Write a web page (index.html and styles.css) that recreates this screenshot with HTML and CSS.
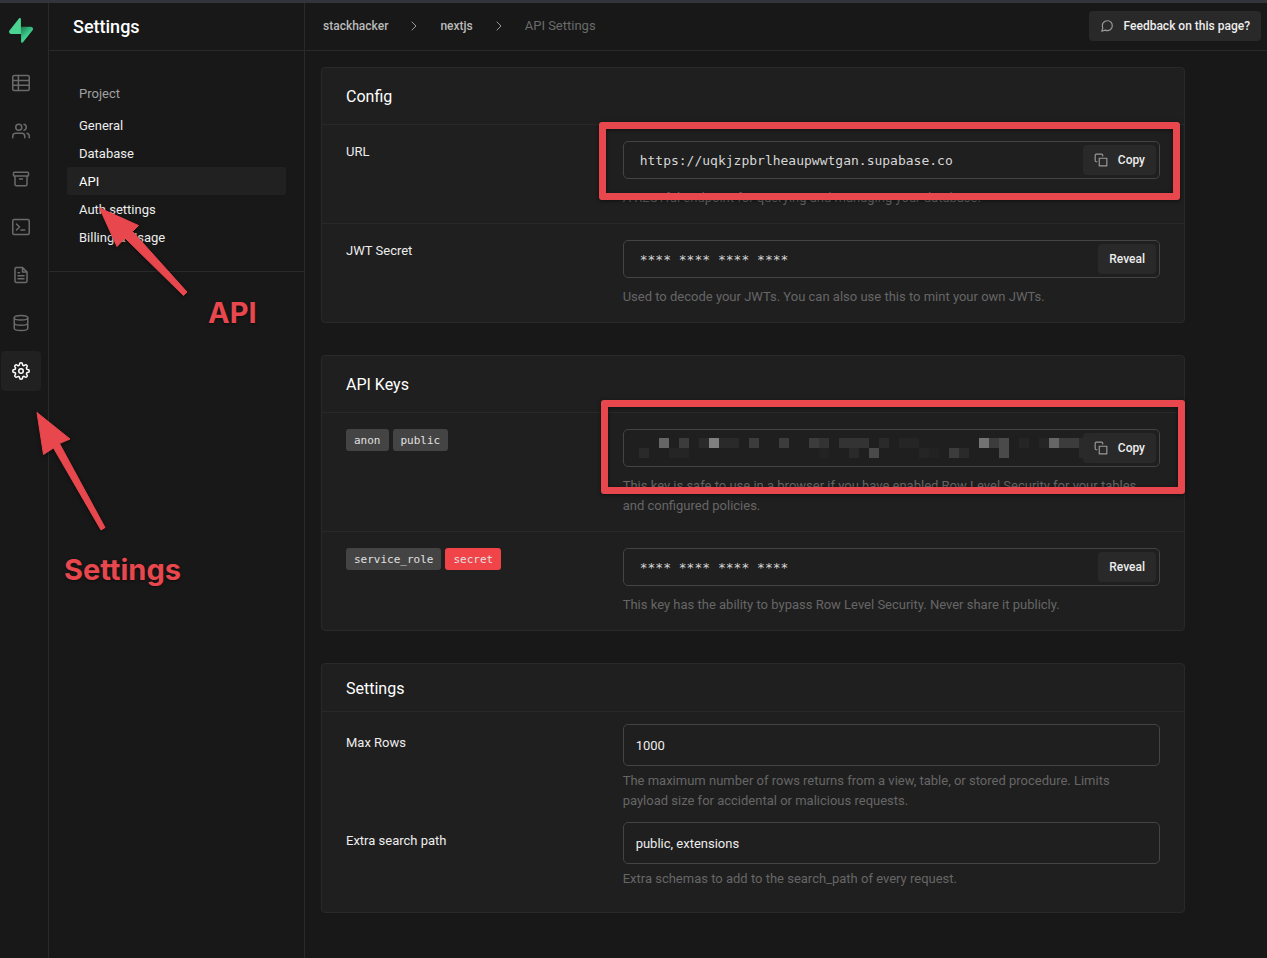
FILE: index.html
```html
<!DOCTYPE html>
<html lang="en">
<head>
<meta charset="utf-8">
<title>API Settings</title>
<link rel="stylesheet" href="styles.css">
</head>
<body>
<div class="app">
  <nav class="rail" aria-label="Main">
    <a class="logo" href="#" aria-label="Home">
      <svg width="24" height="25" viewBox="0 0 109 113">
        <defs><linearGradient id="bolt" x1="54" y1="42" x2="84" y2="76" gradientUnits="userSpaceOnUse"><stop stop-color="#1f7a52"/><stop offset="1" stop-color="#3ecf8e"/></linearGradient></defs>
        <path fill="url(#bolt)" d="M63.7 110.3C60.8 113.9 55 111.900 55 107.300L54 40H99.200C107.400 40 112 49.500 106.900 55.900Z"/>
        <path fill="#4bd391" d="M45.300 2.100C48.200-1.500 54 .4 54 5L54.500 72.300H9.800C1.600 72.300-2.900 62.800 2.200 56.400Z"/>
      </svg>
    </a>
    <a class="rail-item" href="#" aria-label="Table editor"><svg class="icon" viewBox="0 0 24 24"><rect x="1" y="2" width="22" height="20" rx="2"/><path d="M1 8.500h22M1 15h22M8.500 2v20"/></svg></a>
    <a class="rail-item" href="#" aria-label="Authentication"><svg class="icon" viewBox="0 0 24 24"><path d="M17 21v-2a4 4 0 0 0-4-4H5a4 4 0 0 0-4 4v2M23 21v-2a4 4 0 0 0-3-3.870M16 3.130a4 4 0 0 1 0 7.750"/><circle cx="9" cy="7" r="4"/></svg></a>
    <a class="rail-item" href="#" aria-label="Storage"><svg class="icon" viewBox="0 0 24 24"><path d="M20 8v11a2 2 0 0 1-2 2H6a2 2 0 0 1-2-2V8M3 3h18a1 1 0 0 1 1 1v3a1 1 0 0 1-1 1H3a1 1 0 0 1-1-1V4a1 1 0 0 1 1-1zM10 12h4"/></svg></a>
    <a class="rail-item" href="#" aria-label="SQL"><svg class="icon" viewBox="0 0 24 24"><rect x="1" y="2" width="22" height="20" rx="2"/><path d="m6 8 4 4-4 4M12 16h5"/></svg></a>
    <a class="rail-item" href="#" aria-label="API docs"><svg class="icon" viewBox="0 0 24 24"><path d="M14 2H6a2 2 0 0 0-2 2v16a2 2 0 0 0 2 2h12a2 2 0 0 0 2-2V8zM14 2v6h6M16 13H8M16 17H8M10 9H8"/></svg></a>
    <a class="rail-item" href="#" aria-label="Database"><svg class="icon" viewBox="0 0 24 24"><ellipse cx="12" cy="5" rx="9" ry="3"/><path d="M21 12c0 1.660-4 3-9 3s-9-1.340-9-3M3 5v14c0 1.660 4 3 9 3s9-1.340 9-3V5"/></svg></a>
    <a class="rail-item active" href="#" aria-label="Settings" aria-current="page"><svg class="icon" viewBox="0 0 24 24"><circle cx="12" cy="12" r="3"/><path d="M19.400 15a1.650 1.650 0 0 0 .33 1.820l.06.06a2 2 0 1 1-2.830 2.830l-.06-.06a1.650 1.650 0 0 0-2.800 1.170V21a2 2 0 0 1-4 0v-.09A1.650 1.650 0 0 0 9 19.400a1.650 1.650 0 0 0-1.820.33l-.06.06a2 2 0 1 1-2.830-2.830l.06-.06a1.650 1.650 0 0 0-1.170-2.800H3a2 2 0 0 1 0-4h.09A1.650 1.650 0 0 0 4.600 9a1.650 1.650 0 0 0-.33-1.820l-.06-.06a2 2 0 1 1 2.830-2.830l.06.06A1.650 1.650 0 0 0 9 4.680a1.650 1.650 0 0 0 1-1.510V3a2 2 0 0 1 4 0v.09a1.650 1.650 0 0 0 2.820 1.230l.06-.06a2 2 0 1 1 2.830 2.830l-.06.06A1.650 1.650 0 0 0 19.400 9a1.650 1.650 0 0 0 1.510 1H21a2 2 0 0 1 0 4h-.09a1.650 1.650 0 0 0-1.510 1z"/></svg></a>
  </nav>

  <aside class="sidebar">
    <h1 class="sidebar-title">Settings</h1>
    <div class="menu">
      <h2 class="menu-title">Project</h2>
      <a class="menu-item" href="#">General</a>
      <a class="menu-item" href="#">Database</a>
      <a class="menu-item active" href="#" aria-current="page">API</a>
      <a class="menu-item" href="#">Auth settings</a>
      <a class="menu-item" href="#">Billing &amp; Usage</a>
    </div>
  </aside>

  <div class="page">
    <header class="topbar">
      <nav class="crumbs" aria-label="Breadcrumb">
        <a class="crumb" href="#">stackhacker</a>
        <svg class="chevron" viewBox="0 0 16 16"><path d="m6 4 4 4-4 4"/></svg>
        <a class="crumb" href="#">nextjs</a>
        <svg class="chevron" viewBox="0 0 16 16"><path d="m6 4 4 4-4 4"/></svg>
        <span class="crumb-current">API Settings</span>
      </nav>
      <button class="button" type="button"><svg class="button-icon" viewBox="0 0 24 24"><path d="M21 11.500a8.380 8.380 0 0 1-.9 3.800 8.500 8.500 0 0 1-7.600 4.700 8.380 8.380 0 0 1-3.800-.9L3 21l1.900-5.700a8.380 8.380 0 0 1-.9-3.800 8.500 8.500 0 0 1 4.700-7.600 8.380 8.380 0 0 1 3.800-.9h.5a8.480 8.480 0 0 1 8 8z"/></svg>Feedback on this page?</button>
    </header>

    <main class="content">
      <section class="card">
        <h2 class="card-title">Config</h2>
        <div class="row">
          <label class="label" for="url">URL</label>
          <div class="field">
            <div class="control">
              <input class="input mono" id="url" readonly value="https://uqkjzpbrlheaupwwtgan.supabase.co">
              <button class="button" type="button"><svg class="button-icon" viewBox="0 0 24 24"><path d="M9 9h13v13H9zM5 15H4a2 2 0 0 1-2-2V4a2 2 0 0 1 2-2h9a2 2 0 0 1 2 2v1"/></svg>Copy</button>
            </div>
            <p class="help">A RESTful endpoint for querying and managing your database.</p>
            <div class="frame frame-url"></div>
          </div>
        </div>
        <div class="row">
          <label class="label" for="jwt">JWT Secret</label>
          <div class="field">
            <div class="control">
              <input class="input mono" id="jwt" readonly value="**** **** **** ****">
              <button class="button" type="button">Reveal</button>
            </div>
            <p class="help">Used to decode your JWTs. You can also use this to mint your own JWTs.</p>
          </div>
        </div>
      </section>

      <section class="card">
        <h2 class="card-title">API Keys</h2>
        <div class="row">
          <label class="tags" for="anon"><code class="tag">anon</code><code class="tag">public</code></label>
          <div class="field">
            <div class="control">
              <input class="input mono" id="anon" readonly>
              <button class="button" type="button"><svg class="button-icon" viewBox="0 0 24 24"><path d="M9 9h13v13H9zM5 15H4a2 2 0 0 1-2-2V4a2 2 0 0 1 2-2h9a2 2 0 0 1 2 2v1"/></svg>Copy</button>
              <svg class="mosaic" width="450" height="20" viewBox="0 0 45 2" shape-rendering="crispEdges" aria-hidden="true">
                <path fill="#666" d="M2 0h1v1h-1zM41 0h1v1h-1z"/>
                <path fill="#808080" d="M7 0h1v1h-1z"/>
                <path fill="#737373" d="M34 0h1v1h-1z"/>
                <path fill="#4a4a4a" d="M36 0h1v2h-1zM23 1h1v1h-1z"/>
                <path fill="#3c3c3c" d="M4 0h1v1h-1zM11 0h1v1h-1zM14 0h1v1h-1zM17 0h1v1h-1zM35 0h1v1h-1zM42 0h2v1h-2zM31 1h1v1h-1z"/>
                <path fill="#333" d="M18 0h1v1h-1zM20 0h3v1h-3z"/>
                <path fill="#2a2a2a" d="M6 0h1v1h-1zM8 0h2v1h-2zM24 0h1v1h-1zM44 0h1v2h-1zM0 1h1v1h-1zM21 1h1v1h-1zM32 1h1v1h-1z"/>
                <path fill="#252525" d="M26 0h2v1h-2zM38 0h1v1h-1zM40 0h1v1h-1zM3 1h2v1h-2zM28 1h1v1h-1z"/>
                <path fill="#222" d="M18 1h1v1h-1zM29 1h1v1h-1z"/>
              </svg>
            </div>
            <p class="help">This key is safe to use in a browser if you have enabled Row Level Security for your tables and configured policies.</p>
            <div class="frame frame-key"></div>
          </div>
        </div>
        <div class="row">
          <label class="tags" for="service"><code class="tag">service_role</code><code class="tag danger">secret</code></label>
          <div class="field">
            <div class="control">
              <input class="input mono" id="service" readonly value="**** **** **** ****">
              <button class="button" type="button">Reveal</button>
            </div>
            <p class="help">This key has the ability to bypass Row Level Security. Never share it publicly.</p>
          </div>
        </div>
      </section>

      <section class="card form">
        <h2 class="card-title">Settings</h2>
        <div class="row">
          <label class="label" for="rows">Max Rows</label>
          <div class="field">
            <div class="control"><input class="input" id="rows" value="1000"></div>
            <p class="help">The maximum number of rows returns from a view, table, or stored procedure. Limits payload size for accidental or malicious requests.</p>
          </div>
        </div>
        <div class="row">
          <label class="label" for="path">Extra search path</label>
          <div class="field">
            <div class="control"><input class="input" id="path" value="public, extensions"></div>
            <p class="help">Extra schemas to add to the search_path of every request.</p>
          </div>
        </div>
      </section>
    </main>
  </div>
</div>

<svg class="arrows" width="304" height="600" viewBox="0 0 304 600" aria-hidden="true">
  <path d="M99.500 208 138.500 225.500 132.500 231.500 187 292 183.500 295.500 125 238 117 246.500Z"/>
  <path d="M37 412.500 70 439 59.500 443.500 105 527.500 101 530 53.500 448 43.500 454.500Z"/>
</svg>
<span class="note note-api">API</span>
<span class="note note-settings">Settings</span>
</body>
</html>
```
FILE: styles.css
```css
* {
  box-sizing: border-box;
}

body {
  margin: 0;
  position: relative;
  background: #181818;
  color: #ededed;
  font: 13px/20px Roboto, "Open Sans", sans-serif;
}

h1,
h2,
p {
  margin: 0;
}

a {
  color: inherit;
  text-decoration: none;
}

svg {
  display: block;
}

.app {
  display: grid;
  grid-template-columns: 49px 256px 1fr;
  min-height: 100vh;
  border-top: 3px solid #34343c;
}

/* Icon rail */
.rail {
  display: flex;
  flex-direction: column;
  gap: 8px;
  padding: 0 7px 0 1px;
  border-right: 1px solid #2a2a2a;
}

.logo,
.rail-item {
  display: grid;
  place-items: center;
  height: 40px;
  border-radius: 4px;
  color: #6a6a6a;
}

.logo {
  height: 52px;
  padding-top: 2px;
}

.rail-item.active {
  background: #212121;
  color: #fff;
}

.icon {
  width: 18px;
  height: 18px;
}

.icon,
.button-icon,
.chevron {
  fill: none;
  stroke: currentColor;
  stroke-width: 2;
  stroke-linecap: round;
  stroke-linejoin: round;
}

/* Sidebar */
.sidebar {
  border-right: 1px solid #2a2a2a;
}

.sidebar-title {
  height: 48px;
  padding: 0 24px;
  border-bottom: 1px solid #2a2a2a;
  color: #fff;
  font-size: 18px;
  font-weight: 500;
  line-height: 48px;
}

.menu {
  padding: 33px 18px 20px;
  border-bottom: 1px solid #2a2a2a;
}

.menu-title {
  margin-bottom: 7px;
  padding: 0 12px;
  color: #a0a0a0;
  font-size: 13px;
  font-weight: 400;
}

.menu-item {
  display: block;
  padding: 5px 12px 3px;
  border-radius: 2px;
}

.menu-item.active {
  background: #212121;
  color: #fff;
}

/* Top bar */
.topbar {
  display: flex;
  align-items: center;
  justify-content: space-between;
  height: 48px;
  padding: 0 6px 2px 18px;
  border-bottom: 1px solid #2a2a2a;
}

.crumbs {
  display: flex;
  align-items: center;
  gap: 18px;
}

.crumb {
  color: #bbb;
  font-size: 12px;
  font-weight: 500;
}

.crumb-current {
  color: #6a6a6a;
}

.chevron {
  width: 16px;
  height: 16px;
  stroke: #999;
  stroke-width: 1;
}

.button {
  display: flex;
  align-items: center;
  gap: 10px;
  height: 30px;
  padding: 0 11px;
  border: 0;
  border-radius: 4px;
  background: #292929;
  color: #ededed;
  font: 500 12px/20px Roboto, "Open Sans", sans-serif;
}

.button-icon {
  width: 14px;
  height: 14px;
  stroke: #999;
}

/* Cards */
.content {
  display: grid;
  gap: 32px;
  max-width: 896px;
  padding: 16px 16px 45px;
}

.card {
  border: 1px solid #292929;
  border-radius: 4px;
  background: #1f1f1f;
}

.card-title {
  padding: 19px 24px 17px;
  color: #fff;
  font-size: 16px;
  font-weight: 400;
}

.row {
  display: grid;
  grid-template-columns: 1fr 2fr;
  align-items: start;
  gap: 8px;
  padding: 16px 24px 15px;
  border-top: 1px solid #292929;
}

.label {
  padding-top: 1px;
}

.field {
  position: relative;
}

.control {
  position: relative;
  display: flex;
  align-items: center;
  height: 38px;
  padding-right: 3px;
  border: 1px solid #444;
  border-radius: 5px;
}

.input {
  flex: 1;
  min-width: 0;
  height: 100%;
  padding: 0 12px;
  border: 0;
  outline: 0;
  background: transparent;
  color: #ededed;
  font: 13px/20px Roboto, "Open Sans", sans-serif;
}

.input.mono {
  padding: 0 16px;
  color: #d6d6d6;
  font: 13px/20px "DejaVu Sans Mono", monospace;
}

.help {
  margin-top: 9px;
  padding-right: 20px;
  color: #666;
}

.tags {
  display: flex;
  gap: 4px;
}

.tag {
  padding: 2px 8px 0;
  border-radius: 3px;
  background: #444;
  color: #e0e0e0;
  font: 11px/20px "DejaVu Sans Mono", monospace;
}

.tag.danger {
  background: #f04448;
}

.form .card-title {
  padding: 15px 24px 12px;
}

.form .row {
  padding: 12px 24px 0;
}

.form .row + .row {
  padding: 11px 24px 23px;
  border-top: 0;
}

.form .label {
  padding-top: 9px;
}

.form .control {
  height: 42px;
}

.form .help {
  margin-top: 5px;
}

.mosaic {
  position: absolute;
  top: 8px;
  left: 15px;
}

/* Annotations */
.frame {
  position: absolute;
  border: 7px solid #e8484d;
  border-radius: 3px;
  box-shadow: 0 1px 4px rgba(0, 0, 0, 0.5), inset 0 1px 4px rgba(0, 0, 0, 0.5);
  pointer-events: none;
}

.frame-url {
  inset: -19px -20px 8px -24px;
}

.frame-key {
  inset: -29px -25px 22px -22px;
}

.arrows {
  position: absolute;
  top: 0;
  left: 0;
  fill: #e8484d;
  stroke: #e8484d;
  stroke-width: 1;
  stroke-linejoin: round;
  filter: drop-shadow(0 1px 2px rgba(0, 0, 0, 0.5));
  pointer-events: none;
}

.note {
  position: absolute;
  color: #e8484d;
  font: 700 29px/36px Inter, sans-serif;
  text-shadow: 0 1px 3px rgba(0, 0, 0, 0.5);
}

.note-api {
  top: 295px;
  left: 208px;
}

.note-settings {
  top: 552px;
  left: 64px;
}
```
